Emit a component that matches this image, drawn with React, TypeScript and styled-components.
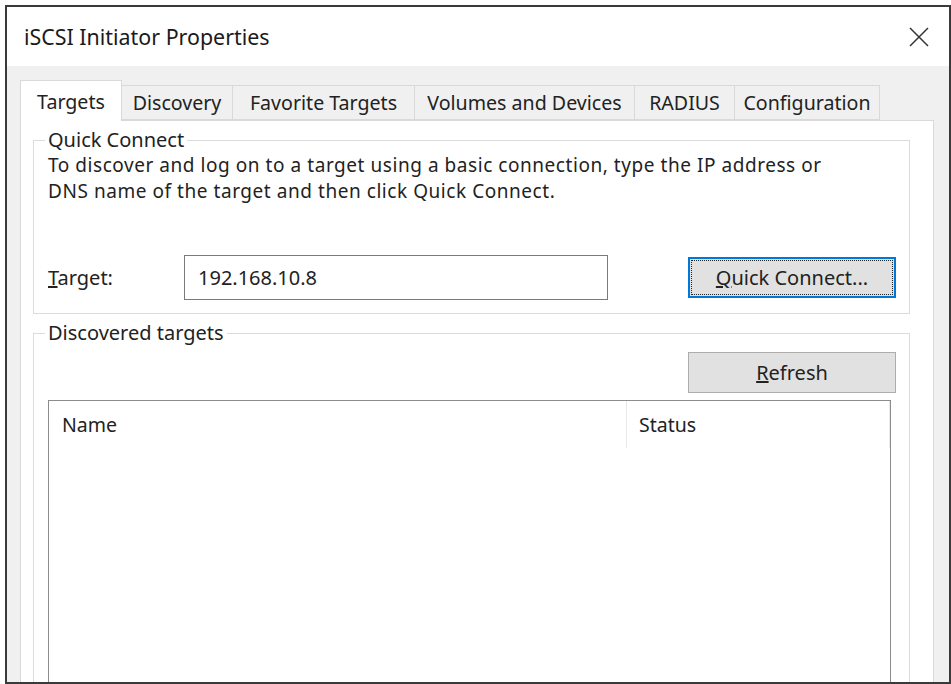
import React from 'react'
import styled, { createGlobalStyle } from 'styled-components'

const GlobalStyle = createGlobalStyle`
  html, body {
    margin: 0;
    padding: 0;
    background: #fff;
  }
  body {
    font-family: "Noto Sans", "Open Sans", sans-serif;
    color: #222;
  }
`

const Window = styled.div`
  box-sizing: border-box;
  margin: 5px 0 0 5px;
  width: 946px;
  height: 679px;
  border: 2px solid #3a3a3a;
  display: flex;
  flex-direction: column;
  overflow: hidden;
  background: #f0f0f0;
`

const TitleBar = styled.div`
  height: 59px;
  flex: none;
  background: #fff;
  display: flex;
  align-items: center;
  justify-content: space-between;
  padding: 0 20px 0 17px;
`

const Title = styled.div`
  font-size: 21.4px;
  color: #1a1a1a;
`

const CloseBtn = styled.div`
  width: 20px;
  height: 20px;
  display: flex;
`

const Body = styled.div`
  flex: 1;
  display: flex;
  flex-direction: column;
  padding: 14px 15px 0 13px;
  min-height: 0;
`

const TabStrip = styled.div`
  display: flex;
  align-items: flex-end;
  height: 40px;
  flex: none;
`

const Tab = styled.div<{ $w: number; $active?: boolean }>`
  box-sizing: border-box;
  width: ${p => p.$w}px;
  height: ${p => (p.$active ? 41 : 35)}px;
  margin-bottom: ${p => (p.$active ? -1 : 0)}px;
  position: relative;
  z-index: ${p => (p.$active ? 2 : 0)};
  background: ${p => (p.$active ? '#fff' : '#f0f0f0')};
  border: 1px solid #d9d9d9;
  border-left-width: ${p => (p.$active ? 1 : 0)}px;
  border-bottom: ${p => (p.$active ? 'none' : '1px solid #d9d9d9')};
  display: flex;
  align-items: center;
  justify-content: center;
  font-size: 19.6px;
  color: #222;
  white-space: nowrap;
`

const Panel = styled.div`
  flex: 1;
  background: #fff;
  border: 1px solid #d9d9d9;
  border-bottom: none;
  padding: 9px 23px 0 12px;
  display: flex;
  flex-direction: column;
  min-height: 0;
`

const GroupBox = styled.fieldset<{ $grow?: boolean }>`
  margin: ${p => (p.$grow ? '9px 0 0' : '0')};
  border: 1px solid #dcdcdc;
  padding: 0 13px 13px 14px;
  min-width: 0;
  ${p => (p.$grow ? 'flex: 1; border-bottom: none;' : '')}
`

const Legend = styled.legend`
  font-size: 20px;
  line-height: 20px;
  padding: 0 3px;
  margin-left: -3px;
  color: #222;
`

const Desc = styled.p`
  margin: 2px 0 0;
  font-size: 19px;
  letter-spacing: 0.55px;
  line-height: 26px;
  white-space: nowrap;
`

const TargetRow = styled.div`
  display: flex;
  align-items: center;
  margin-top: 51px;
  height: 45px;
`

const FieldLabel = styled.label`
  width: 136px;
  font-size: 20px;
`

const TextInput = styled.div`
  box-sizing: border-box;
  width: 424px;
  height: 45px;
  border: 1px solid #7a7a7a;
  display: flex;
  align-items: center;
  padding-left: 13px;
  font-size: 20px;
  background: #fff;
`

const Button = styled.button<{ $focused?: boolean }>`
  box-sizing: border-box;
  margin-left: auto;
  width: 208px;
  height: 41px;
  background: #e1e1e1;
  border: ${p => (p.$focused ? '2px solid #0078d7' : '1px solid #adadad')};
  outline: ${p => (p.$focused ? '1px dotted #222' : 'none')};
  outline-offset: -4px;
  font-family: inherit;
  font-size: 20px;
  color: #222;
  padding: 0;
`

const ButtonRow = styled.div`
  display: flex;
  margin-top: 9px;
`

const ListView = styled.div`
  margin: 7px 5px 0 0;
  height: 320px;
  border: 1px solid #8c8c8c;
  background: #fff;
`

const ListHeader = styled.div`
  display: flex;
  height: 47px;
`

const HeaderCell = styled.div<{ $w?: number }>`
  box-sizing: border-box;
  ${p => (p.$w ? `width: ${p.$w}px;` : 'flex: 1;')}
  display: flex;
  align-items: center;
  padding-left: ${p => (p.$w ? 13 : 12)}px;
  font-size: 19.5px;
  color: #222;
  border-right: 1px solid #e8e8e8;
`

const tabs = [
  { label: 'Targets', w: 102 },
  { label: 'Discovery', w: 111 },
  { label: 'Favorite Targets', w: 182 },
  { label: 'Volumes and Devices', w: 220 },
  { label: 'RADIUS', w: 100 },
  { label: 'Configuration', w: 145 },
]

export default function App() {
  return (
    <>
      <GlobalStyle />
      <Window>
        <TitleBar>
          <Title>iSCSI Initiator Properties</Title>
          <CloseBtn>
            <svg width="20" height="20" viewBox="0 0 20 20">
              <path d="M1 1 L19 19 M19 1 L1 19" stroke="#333" strokeWidth="1.5" fill="none" />
            </svg>
          </CloseBtn>
        </TitleBar>
        <Body>
          <TabStrip>
            {tabs.map((t, i) => (
              <Tab key={t.label} $w={t.w} $active={i === 0}>
                {t.label}
              </Tab>
            ))}
          </TabStrip>
          <Panel>
            <GroupBox>
              <Legend>Quick Connect</Legend>
              <Desc>
                To discover and log on to a target using a basic connection, type the IP address or
                <br />
                DNS name of the target and then click Quick Connect.
              </Desc>
              <TargetRow>
                <FieldLabel><u>T</u>arget:</FieldLabel>
                <TextInput>192.168.10.8</TextInput>
                <Button $focused><u>Q</u>uick Connect...</Button>
              </TargetRow>
            </GroupBox>
            <GroupBox $grow>
              <Legend>Discovered targets</Legend>
              <ButtonRow>
                <Button><u>R</u>efresh</Button>
              </ButtonRow>
              <ListView>
                <ListHeader>
                  <HeaderCell $w={578}>Name</HeaderCell>
                  <HeaderCell>Status</HeaderCell>
                </ListHeader>
              </ListView>
            </GroupBox>
          </Panel>
        </Body>
      </Window>
    </>
  )
}
